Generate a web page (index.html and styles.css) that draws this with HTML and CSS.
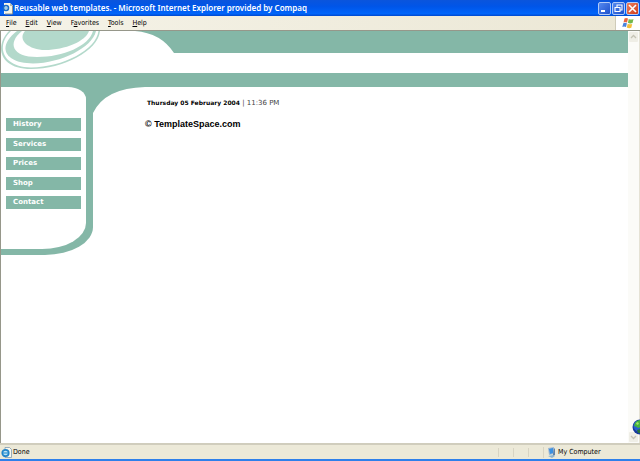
FILE: index.html
```html
<!DOCTYPE html>
<html lang="en">
<head>
<meta charset="utf-8">
<title>Reusable web templates.</title>
<link rel="stylesheet" href="styles.css">
</head>
<body>
<header class="titlebar">
  <svg class="app-icon" viewBox="0 0 11 13" aria-hidden="true">
    <path d="M2 1h6l3 3v8H2z" fill="#f6f4e6"/>
    <path d="M8 1v3h3" fill="#b9bba9"/>
    <path d="M10.500 4v8H3" fill="none" stroke="#8d9291"/>
    <circle cx="4" cy="6" r="2.500" fill="none" stroke="#176bc9" stroke-width="1.500"/>
    <path d="M2 6h4" fill="none" stroke="#4ba5ec"/>
  </svg>
  <h1 class="window-title">Reusable web templates. - Microsoft Internet Explorer provided by Compaq</h1>
  <div class="window-buttons">
    <button class="win-btn" type="button" aria-label="Minimize"><svg viewBox="0 0 11 11"><path d="M2 8h4" stroke="#fff" stroke-width="2"/></svg></button>
    <button class="win-btn" type="button" aria-label="Restore"><svg viewBox="0 0 11 11"><path d="M4 4V2h5v5H7M2 4.500h5v4H2z" fill="none" stroke="#fff" stroke-width="1.100"/></svg></button>
    <button class="win-btn close" type="button" aria-label="Close"><svg viewBox="0 0 11 11"><path d="M2 2l7 7M9 2l-7 7" stroke="#fff" stroke-width="1.600"/></svg></button>
  </div>
</header>
<nav class="menubar" aria-label="Window menu">
  <button type="button"><u>F</u>ile</button>
  <button type="button"><u>E</u>dit</button>
  <button type="button"><u>V</u>iew</button>
  <button type="button">F<u>a</u>vorites</button>
  <button type="button"><u>T</u>ools</button>
  <button type="button"><u>H</u>elp</button>
  <span class="flag">
    <svg viewBox="0 0 12 12" aria-hidden="true">
      <path d="M2.500 1.500Q4 .3 6 1.500L5 5.500Q3 4.500 1.500 5.500z" fill="#ed6540"/>
      <path d="M6.800 2Q9 3.200 11.500 2L10.500 6Q8 7 5.900 5.800z" fill="#72b84a"/>
      <path d="M1.300 6.300Q3 5.300 4.900 6.300L4 10Q2 9 .3 10z" fill="#4a82dc"/>
      <path d="M5.700 6.700Q8 7.900 10.200 6.900L9.300 10.700Q7 11.700 4.800 10.500z" fill="#f4bd39"/>
    </svg>
  </span>
</nav>
<div class="viewport">
  <div class="page">
    <div class="banner">
      <svg class="banner-art" viewBox="0 0 173 42" aria-hidden="true">
        <path d="M8 0C-6 14-3 38 30 38C62 38 97 20 99 0z" fill="#b3d9cb"/>
        <path d="M10 0C-5 14 0 36 30 36.500C62 36 95 19 97.500 0z" fill="#fff"/>
        <path d="M16 0C-5 16 4 32.500 32 32.500C60 32 91 17 95 0z" fill="#b3d9cb"/>
        <path d="M21 0C6 12 11 26 36 26C62 26 88 15 92 0z" fill="#fff"/>
        <path d="M24 0C16 9 28 19 44 19C64 19 85 10 88 0z" fill="#b3d9cb"/>
        <path d="M134 0Q160 2 173 22V0z" fill="#84b7a7"/>
      </svg>
      <div class="banner-fill"></div>
    </div>
    <div class="band"></div>
    <div class="columns">
      <aside class="sidebar">
        <nav class="sidebar-panel" aria-label="Site">
          <ul class="links">
            <li><a href="#history">History</a></li>
            <li><a href="#services">Services</a></li>
            <li><a href="#prices">Prices</a></li>
            <li><a href="#shop">Shop</a></li>
            <li><a href="#contact">Contact</a></li>
          </ul>
        </nav>
      </aside>
      <svg class="corner" viewBox="0 0 52 26" aria-hidden="true"><path d="M0 0H52Q12 1 0 26z" fill="#84b7a7"/></svg>
      <main class="content">
        <p class="date"><b>Thursday 05 February 2004</b> | 11:36 PM</p>
        <p class="copyright">© TemplateSpace.com</p>
      </main>
    </div>
  </div>
  <div class="scrollbar">
    <svg viewBox="0 0 9 10" aria-hidden="true"><path d="M2 6l2.500-2.500L7 6" fill="none" stroke="#c5c3b5" stroke-width="1.300"/></svg>
    <svg viewBox="0 0 9 10" aria-hidden="true"><path d="M2 4l2.500 2.500L7 4" fill="none" stroke="#c5c3b5" stroke-width="1.300"/></svg>
  </div>
  <svg class="globe" viewBox="0 0 8 16" aria-hidden="true">
    <circle cx="8" cy="8" r="7.500" fill="#183a9c"/>
    <circle cx="7" cy="7" r="5.500" fill="#2860cf"/>
    <path d="M3 4Q5 1 8 1v7Q6 10 5 8L2 7z" fill="#46b43d"/>
    <path d="M4 4l2-1 1 2-2 1z" fill="#a4e266"/>
    <path d="M5 11l3-1v4H6z" fill="#26743b"/>
  </svg>
</div>
<footer class="statusbar">
  <svg class="status-icon" viewBox="0 0 11 11" aria-hidden="true">
    <path d="M4 .5h4.500l2 2v8H4z" fill="#f8f8ef" stroke="#7f9bb0" stroke-width=".8"/>
    <circle cx="4.500" cy="6" r="3.200" fill="#bfe4f5" stroke="#2385c9" stroke-width="1.800"/>
    <path d="M2 6h5" fill="none" stroke="#3198d5" stroke-width="1.200"/>
  </svg>
  <span class="status-text">Done</span>
  <span class="cell"></span><span class="cell"></span><span class="cell"></span>
  <span class="zone">
    <svg viewBox="0 0 9 11" aria-hidden="true">
      <path d="M1 1l6-1v7l-5 1z" fill="#a1b8d2"/>
      <path d="M2 2l4-1v5l-3 1z" fill="#3b91e2"/>
      <path d="M7 1l1 1v6l-2 1V7z" fill="#6382a6"/>
      <path d="M1 9l5-1 2 1-3 2z" fill="#8eb5cf"/>
    </svg>
    My Computer
  </span>
</footer>
</body>
</html>
```
FILE: styles.css
```css
* { box-sizing: border-box; }

body {
  margin: 0;
  min-height: 100vh;
  display: flex;
  flex-direction: column;
  background: #fff;
  color: #000;
  font-family: "DejaVu Sans Condensed", "DejaVu Sans", sans-serif;
  font-size: 7px;
  line-height: 10px;
}

button {
  font: inherit;
  color: inherit;
  margin: 0;
  padding: 0;
  border: 0;
  background: none;
}

svg { display: block; }

.titlebar {
  flex: none;
  height: 16px;
  display: flex;
  align-items: center;
  gap: 1px;
  padding: 0 1px 0 2px;
  background: linear-gradient(#0b55dc, #0055e8 40%, #0065fa 85%, #0048cd);
}

.app-icon { width: 11px; height: 13px; }

.window-title {
  flex: 1;
  margin: 0;
  color: #fff;
  font-family: "Noto Sans", "Open Sans", sans-serif;
  font-size: 8px;
  font-weight: 600;
  line-height: 12px;
  white-space: nowrap;
}

.window-buttons { display: flex; gap: 1px; }

.win-btn {
  width: 13px;
  height: 13px;
  border: 1px solid #b2caf7;
  border-radius: 2px;
  background: linear-gradient(135deg, #5589ef, #1d50cc);
}

.close { background: linear-gradient(135deg, #ed805d, #cf3c1b); }

.menubar {
  flex: none;
  height: 14px;
  display: flex;
  align-items: stretch;
  gap: 9px;
  padding-left: 6px;
  background: linear-gradient(90deg, #f5f3e8, #ebe7d5);
}

.flag {
  width: 25px;
  margin-left: auto;
  display: flex;
  align-items: center;
  justify-content: center;
  border-left: 1px solid #cfcbb9;
  background: #fff;
}

.flag svg { width: 12px; height: 12px; }

.viewport {
  position: relative;
  flex: 1;
  display: flex;
  border: 1px solid #96978a;
  border-width: 1px 0 0 1px;
}

.page { flex: 1; }

.banner { height: 42px; display: flex; }

.banner-art { flex: none; width: 173px; height: 42px; }

.banner-fill { flex: 1; height: 22px; background: #84b7a7; }

.band { height: 14px; background: #84b7a7; }

.columns { display: flex; align-items: flex-start; }

.sidebar {
  width: 92px;
  padding: 0 7px 6px 0;
  background: #84b7a7;
  border-radius: 0 0 48px 0 / 0 0 28px 0;
}

.sidebar-panel {
  padding: 31px 5px 40px;
  background: #fff;
  border-radius: 0 18px 44px 0 / 0 12px 26px 0;
}

.links {
  height: 91px;
  margin: 0;
  padding: 0;
  display: flex;
  flex-direction: column;
  justify-content: space-between;
  list-style: none;
}

.links a {
  display: block;
  padding-left: 7px;
  background: #84b7a7;
  color: #fff;
  font-family: "DejaVu Sans", sans-serif;
  font-size: 7px;
  font-weight: bold;
  line-height: 13px;
  text-decoration: none;
}

.corner { flex: none; width: 52px; height: 26px; }

.content { flex: 1; padding-top: 11px; }

.content p { margin: 0; }

.date {
  padding-left: 2px;
  color: #444;
  font-family: "DejaVu Sans", sans-serif;
  font-size: 7px;
}

.date b { color: #000; font-size: 6px; }

.content .copyright {
  margin-top: 11px;
  font-family: "Liberation Sans", sans-serif;
  font-size: 9px;
  font-weight: bold;
}

.scrollbar {
  width: 12px;
  padding: 1px 2px 1px 1px;
  display: flex;
  flex-direction: column;
  justify-content: space-between;
  border-right: 1px solid #e5e2d5;
  background: #fbfbf8;
}

.scrollbar svg {
  width: 9px;
  height: 10px;
  border-radius: 1px;
  background: #efeee6;
}

.globe {
  position: absolute;
  right: 0;
  bottom: 8px;
  width: 8px;
  height: 16px;
}

.statusbar {
  flex: none;
  height: 18px;
  display: flex;
  align-items: center;
  padding-left: 1px;
  border-top: 2px solid #d0cdbd;
  border-bottom: 2px solid #2e80ea;
  background: #ece9d8;
}

.status-icon { width: 11px; height: 11px; }

.status-text { flex: 1; padding-left: 1px; }

.cell { width: 15px; height: 9px; border-left: 1px solid #d8d4c3; }

.zone {
  width: 97px;
  display: flex;
  align-items: center;
  gap: 2px;
  padding-left: 3px;
  border-left: 1px solid #d8d4c3;
}

.zone svg { width: 9px; height: 11px; }
```
